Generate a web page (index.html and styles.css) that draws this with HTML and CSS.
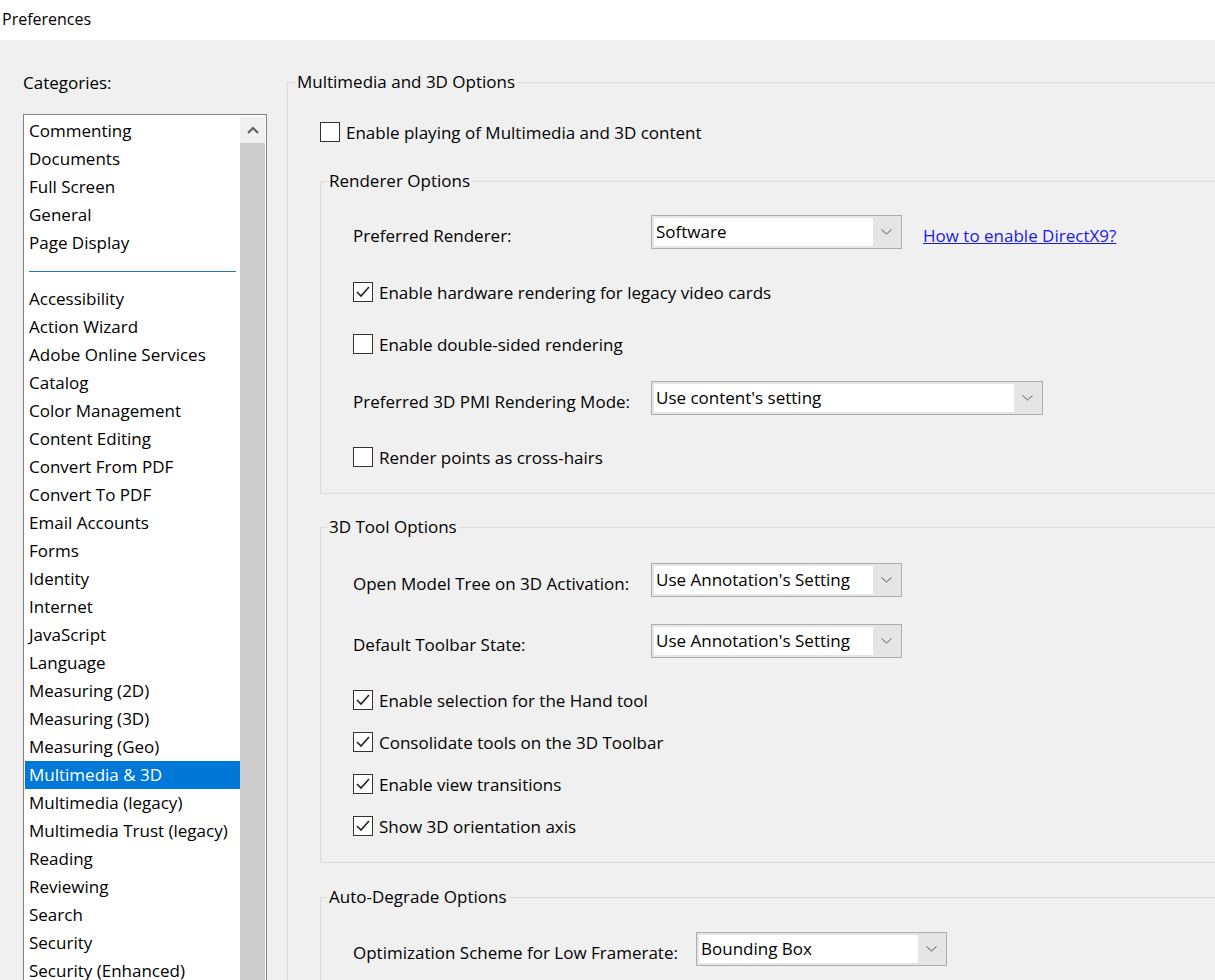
FILE: index.html
```html
<!DOCTYPE html>
<html>
<head>
<meta charset="utf-8">
<title>Preferences</title>
<link rel="stylesheet" href="styles.css">
</head>
<body>
<div class="titlebar">Preferences</div>
<div class="main">
  <div class="sidebar">
    <div class="cat-label">Categories:</div>
    <div class="listbox">
      <div class="items">
        <div class="item">Commenting</div>
        <div class="item">Documents</div>
        <div class="item">Full Screen</div>
        <div class="item">General</div>
        <div class="item">Page Display</div>
        <div class="sep"></div>
        <div class="item">Accessibility</div>
        <div class="item">Action Wizard</div>
        <div class="item">Adobe Online Services</div>
        <div class="item">Catalog</div>
        <div class="item">Color Management</div>
        <div class="item">Content Editing</div>
        <div class="item">Convert From PDF</div>
        <div class="item">Convert To PDF</div>
        <div class="item">Email Accounts</div>
        <div class="item">Forms</div>
        <div class="item">Identity</div>
        <div class="item">Internet</div>
        <div class="item">JavaScript</div>
        <div class="item">Language</div>
        <div class="item">Measuring (2D)</div>
        <div class="item">Measuring (3D)</div>
        <div class="item">Measuring (Geo)</div>
        <div class="item selected">Multimedia &amp; 3D</div>
        <div class="item">Multimedia (legacy)</div>
        <div class="item">Multimedia Trust (legacy)</div>
        <div class="item">Reading</div>
        <div class="item">Reviewing</div>
        <div class="item">Search</div>
        <div class="item">Security</div>
        <div class="item">Security (Enhanced)</div>
      </div>
      <div class="scrollbar">
        <div class="sb-up"><svg width="12" height="8" viewBox="0 0 12 8"><polyline points="1,7 6,2 11,7" fill="none" stroke="#606060" stroke-width="2.2"/></svg></div>
        <div class="sb-thumb"></div>
      </div>
    </div>
  </div>

  <div class="panel">
    <fieldset class="group outer">
      <legend>Multimedia and 3D Options</legend>
      <div class="outer-body">
        <div class="cb-row mt24">
          <span class="cb"></span><span>Enable playing of Multimedia and 3D content</span>
        </div>

        <fieldset class="group inner mt23">
          <legend>Renderer Options</legend>
          <div class="inner-body pb22">
            <div class="dd-row mt22">
              <span class="dd-label">Preferred Renderer:</span>
              <div class="dropdown w251"><span class="dd-value">Software</span><span class="dd-arrow"><svg width="11" height="6" viewBox="0 0 11 6"><polyline points="0.5,0.5 5.5,5 10.5,0.5" fill="none" stroke="#555" stroke-width="1"/></svg></span></div>
              <a class="link" href="#">How to enable DirectX9?</a>
            </div>
            <div class="cb-row mt29">
              <span class="cb"><svg width="18" height="18" viewBox="0 0 18 18"><polyline points="3,9 7,13 15,4" fill="none" stroke="#222" stroke-width="1.6"/></svg></span><span>Enable hardware rendering for legacy video cards</span>
            </div>
            <div class="cb-row mt24">
              <span class="cb"></span><span>Enable double-sided rendering</span>
            </div>
            <div class="dd-row mt23">
              <span class="dd-label">Preferred 3D PMI Rendering Mode:</span>
              <div class="dropdown w392"><span class="dd-value">Use content's setting</span><span class="dd-arrow"><svg width="11" height="6" viewBox="0 0 11 6"><polyline points="0.5,0.5 5.5,5 10.5,0.5" fill="none" stroke="#555" stroke-width="1"/></svg></span></div>
            </div>
            <div class="cb-row mt28">
              <span class="cb"></span><span>Render points as cross-hairs</span>
            </div>
          </div>
        </fieldset>

        <fieldset class="group inner mt21">
          <legend>3D Tool Options</legend>
          <div class="inner-body pb22">
            <div class="dd-row mt24">
              <span class="dd-label">Open Model Tree on 3D Activation:</span>
              <div class="dropdown w251"><span class="dd-value">Use Annotation's Setting</span><span class="dd-arrow"><svg width="11" height="6" viewBox="0 0 11 6"><polyline points="0.5,0.5 5.5,5 10.5,0.5" fill="none" stroke="#555" stroke-width="1"/></svg></span></div>
            </div>
            <div class="dd-row mt27">
              <span class="dd-label">Default Toolbar State:</span>
              <div class="dropdown w251"><span class="dd-value">Use Annotation's Setting</span><span class="dd-arrow"><svg width="11" height="6" viewBox="0 0 11 6"><polyline points="0.5,0.5 5.5,5 10.5,0.5" fill="none" stroke="#555" stroke-width="1"/></svg></span></div>
            </div>
            <div class="cb-row mt28">
              <span class="cb"><svg width="18" height="18" viewBox="0 0 18 18"><polyline points="3,9 7,13 15,4" fill="none" stroke="#222" stroke-width="1.6"/></svg></span><span>Enable selection for the Hand tool</span>
            </div>
            <div class="cb-row mt14">
              <span class="cb"><svg width="18" height="18" viewBox="0 0 18 18"><polyline points="3,9 7,13 15,4" fill="none" stroke="#222" stroke-width="1.6"/></svg></span><span>Consolidate tools on the 3D Toolbar</span>
            </div>
            <div class="cb-row mt14">
              <span class="cb"><svg width="18" height="18" viewBox="0 0 18 18"><polyline points="3,9 7,13 15,4" fill="none" stroke="#222" stroke-width="1.6"/></svg></span><span>Enable view transitions</span>
            </div>
            <div class="cb-row mt14">
              <span class="cb"><svg width="18" height="18" viewBox="0 0 18 18"><polyline points="3,9 7,13 15,4" fill="none" stroke="#222" stroke-width="1.6"/></svg></span><span>Show 3D orientation axis</span>
            </div>
          </div>
        </fieldset>

        <fieldset class="group inner mt22">
          <legend>Auto-Degrade Options</legend>
          <div class="inner-body pb22">
            <div class="dd-row mt23">
              <span class="dd-label wide">Optimization Scheme for Low Framerate:</span>
              <div class="dropdown w251"><span class="dd-value">Bounding Box</span><span class="dd-arrow"><svg width="11" height="6" viewBox="0 0 11 6"><polyline points="0.5,0.5 5.5,5 10.5,0.5" fill="none" stroke="#555" stroke-width="1"/></svg></span></div>
            </div>
          </div>
        </fieldset>
      </div>
    </fieldset>
  </div>
</div>
</body>
</html>
```

FILE: styles.css
```css
html, body {
  margin: 0;
  padding: 0;
}
body {
  width: 1215px;
  height: 980px;
  overflow: hidden;
  background: #f0f0f0;
  font-family: "Open Sans", "Noto Sans", sans-serif;
  font-size: 17px;
  color: #000;
}
.titlebar {
  height: 40px;
  background: #fff;
  line-height: 38px;
  padding-left: 2px;
  font-size: 16px;
}
.main {
  display: flex;
  height: 940px;
  overflow: hidden;
}
.sidebar {
  width: 264px;
  flex: none;
  padding-left: 23px;
}
.cat-label {
  margin-top: 31px;
  line-height: 24px;
}
.listbox {
  margin-top: 19px;
  box-sizing: border-box;
  width: 244px;
  height: 900px;
  border: 1px solid #828282;
  background: #fff;
  padding: 1px 1px 0 1px;
  display: flex;
}
.items {
  width: 215px;
  padding-top: 1px;
  flex: none;
}
.item {
  height: 28px;
  line-height: 28px;
  padding-left: 4px;
  white-space: nowrap;
}
.item.selected {
  background: #0078d7;
  color: #fff;
}
.sep {
  height: 14px;
  margin: 0 4px 13px 4px;
  border-bottom: 1px solid #1979c9;
}
.scrollbar {
  width: 25px;
  flex: none;
  padding-top: 1px;
  display: flex;
  flex-direction: column;
}
.sb-up {
  height: 26px;
  background: #f0f0f0;
  display: flex;
  align-items: center;
  justify-content: center;
}
.sb-thumb {
  flex: 1;
  background: #cdcdcd;
}
.panel {
  flex: 1;
  min-width: 0;
  overflow: hidden;
  padding-top: 30px;
}
fieldset {
  margin: 0;
}
.group {
  min-width: 0;
  border: 1px solid #dcdcdc;
  padding: 0;
}
.group > legend {
  padding: 0 2px;
  line-height: 24px;
  height: 24px;
}
.outer {
  width: 1200px;
  padding-left: 7px;
}
.outer-body {
  padding-left: 25px;
}
.inner {
  width: 1000px;
  padding-left: 6px;
}
.inner-body {
  padding-left: 26px;
}
.cb-row {
  display: flex;
  align-items: center;
  height: 28px;
  white-space: nowrap;
}
.cb {
  box-sizing: border-box;
  width: 20px;
  height: 20px;
  border: 1px solid #333;
  background: #fff;
  margin-right: 6px;
  display: flex;
  align-items: center;
  justify-content: center;
  flex: none;
}
.dd-row {
  display: flex;
  align-items: flex-start;
  height: 34px;
  white-space: nowrap;
}
.dd-label {
  width: 298px;
  flex: none;
  line-height: 24px;
  padding-top: 9px;
}
.dd-label.wide {
  width: 343px;
}
.dropdown {
  box-sizing: border-box;
  height: 34px;
  border: 1px solid #adadad;
  background: #e5e5e5;
  padding: 2px;
  display: flex;
  flex: none;
}
.dropdown.w251 { width: 251px; }
.dropdown.w392 { width: 392px; }
.dd-value {
  flex: 1;
  background: #fff;
  padding-left: 2px;
  line-height: 28px;
}
.dd-arrow {
  width: 26px;
  display: flex;
  align-items: center;
  justify-content: center;
}
.link {
  margin-left: 21px;
  line-height: 24px;
  padding-top: 9px;
  color: #1a1ae6;
  text-decoration: underline;
}
.mt14 { margin-top: 14px; }
.mt21 { margin-top: 21px; }
.mt22 { margin-top: 22px; }
.mt23 { margin-top: 23px; }
.mt24 { margin-top: 24px; }
.mt27 { margin-top: 27px; }
.mt28 { margin-top: 28px; }
.mt29 { margin-top: 29px; }
.pb22 { padding-bottom: 22px; }
```
